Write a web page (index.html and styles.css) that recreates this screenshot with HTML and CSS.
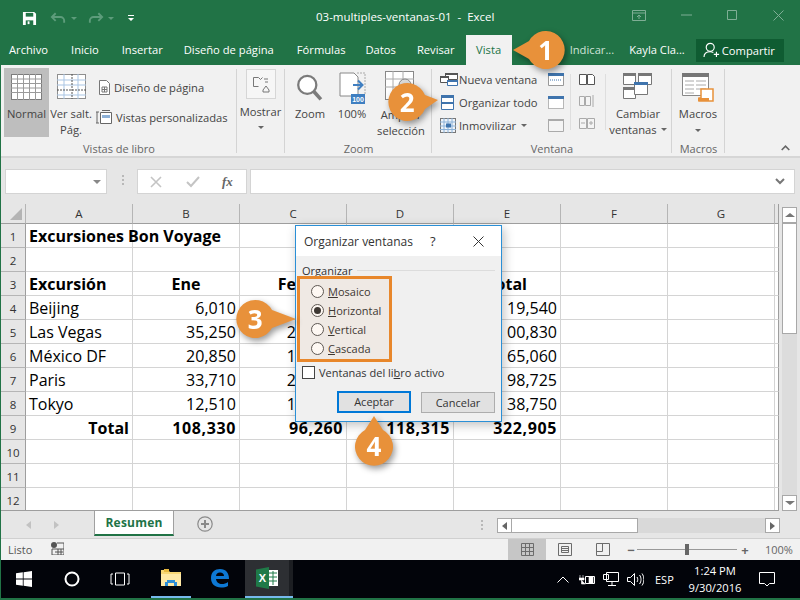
FILE: index.html
```html
<!DOCTYPE html>
<html lang="es">
<head>
<meta charset="utf-8">
<title>03-multiples-ventanas-01 - Excel</title>
<link rel="stylesheet" href="styles.css">
</head>
<body>
<div class="app">
  <header class="titlebar">
    <div class="qat">
      <svg width="15" height="15" viewBox="0 0 16 16"><path d="M1 1h12l2 2v12H1z" fill="#fff"/><path d="M4 2h8v4H4z" fill="#217346"/><path d="M4 10h8v5H4z" fill="#217346"/><path d="M6 11h2v3H6z" fill="#fff"/></svg>
      <svg class="q-undo" width="17" height="14" viewBox="0 0 18 14"><path d="M6 2L2 6l4 4M2 6h9a4 4 0 0 1 4 4v2" fill="none" stroke="#5d9c7b" stroke-width="2"/></svg>
      <span class="caret-dim"></span>
      <svg class="q-redo" width="17" height="14" viewBox="0 0 18 14"><path d="M12 2l4 4-4 4M16 6H7a4 4 0 0 0-4 4v2" fill="none" stroke="#5d9c7b" stroke-width="2"/></svg>
      <span class="caret-dim"></span>
      <svg class="q-menu" width="8" height="8" viewBox="0 0 8 8"><path d="M1 1h6v1H1zM1 4h6L4 7z" fill="#fff"/></svg>
    </div>
    <div class="doc-title">03-multiples-ventanas-01&nbsp; -&nbsp; Excel</div>
    <div class="winbtns">
      <svg width="14" height="11" viewBox="0 0 14 11"><path d="M.5.500h13v10H.5zM.5 3h13M7 9V5M5 7l2-2 2 2" fill="none" stroke="#7fae95"/></svg>
      <svg width="11" height="2" viewBox="0 0 11 2"><path d="M0 1h11" stroke="#7fae95"/></svg>
      <svg width="11" height="11" viewBox="0 0 11 11"><path d="M.5.500h9v9h-9z" fill="none" stroke="#7fae95"/></svg>
      <svg width="11" height="11" viewBox="0 0 11 11"><path d="M.5.500l10 10M10.500 .5l-10 10" fill="none" stroke="#7fae95"/></svg>
    </div>
  </header>

  <nav class="tabs">
    <span class="tab t-archivo">Archivo</span>
    <span class="tab t-inicio">Inicio</span>
    <span class="tab t-insertar">Insertar</span>
    <span class="tab t-diseno">Diseño de página</span>
    <span class="tab t-formulas">Fórmulas</span>
    <span class="tab t-datos">Datos</span>
    <span class="tab t-revisar">Revisar</span>
    <span class="tab active">Vista</span>
    <span class="tab t-indicar">Indicar...</span>
    <span class="tab t-user">Kayla Cla...</span>
    <span class="share">
      <svg width="18" height="16" viewBox="0 0 20 18"><circle cx="8" cy="6" r="4.500" fill="none" stroke="#fff" stroke-width="1.300"/><path d="M1 17c0-4 3-6 7-6 1.500 0 2.500.3 3.500.8M15 11v6M12 14h6" fill="none" stroke="#fff" stroke-width="1.300"/></svg>
      Compartir
    </span>
  </nav>

  <section class="ribbon">
    <div class="group g-vistas">
      <div class="group-body">
        <div class="big b-normal selected">
          <svg width="31" height="26" viewBox="0 0 31 26"><rect x=".5" y=".5" width="30" height="25" fill="#fff" stroke="#7c7c7c"/><path d="M0 5h31M0 9.500h31M0 14h31M0 18.500h31M6.500 0v26M12.500 0v26M18.500 0v26M24.500 0v26" stroke="#9a9a9a"/></svg>
          <span>Normal</span>
        </div>
        <div class="big b-salt">
          <svg width="29" height="25" viewBox="0 0 29 25"><rect x=".5" y=".5" width="28" height="24" fill="#fff" stroke="#8f8f8f"/><path d="M0 6h29M0 11h29M0 21h29M7 0v25M21 0v25" stroke="#a9c5e4"/><path d="M0 16h29M15 0v25" stroke="#555" stroke-dasharray="2 1"/></svg>
          <span>Ver salt.<br>Pág.</span>
        </div>
        <div class="stack s-vistas">
          <div class="row-cmd"><svg class="ind2" width="13" height="15" viewBox="0 0 13 15"><path d="M1.500.5h7l3 3v11h-10zM4 7h5v5H4zM6.500 7v5M4 9.500h5" fill="#fff" stroke="#777"/></svg><span>Diseño de página</span></div>
          <div class="row-cmd"><svg width="17" height="15" viewBox="0 0 17 15"><path d="M4.500 2.500h11v11h-11zM1 2v11M3 2H0M3 13H0M6 .5h8" fill="#fff" stroke="#666"/><path d="M6 5h8v3H6z" fill="#8db0d6"/></svg><span>Vistas personalizadas</span></div>
        </div>
      </div>
      <div class="group-label">Vistas de libro</div>
    </div>

    <div class="group g-mostrar">
      <div class="group-body">
        <div class="big b-mostrar">
          <span class="boxed"><svg width="18" height="18" viewBox="0 0 18 18"><path d="M1.500 2.500h5l2 2 2-2h0M1.500 2.500v9h5M12 4h4M13 7h3M11 15l3-4 3 4v2h-6z" fill="none" stroke="#777"/></svg></span>
          <span>Mostrar</span>
          <i class="caret"></i>
        </div>
      </div>
    </div>

    <div class="group g-zoom">
      <div class="group-body">
        <div class="big b-zoom">
          <svg width="30" height="29" viewBox="0 0 30 32"><circle cx="12" cy="12" r="10" fill="#fff" stroke="#7b7b7b" stroke-width="2.500"/><path d="M19 19l8 9" stroke="#7b7b7b" stroke-width="4"/></svg>
          <span>Zoom</span>
        </div>
        <div class="big b-100">
          <svg width="27" height="32" viewBox="0 0 27 32"><path d="M1 1h14l4 4v19H1z" fill="#fff" stroke="#888"/><path d="M18 1h8v22" fill="none" stroke="#aaa" stroke-dasharray="2 1"/><path d="M14 13h9M19 8.500l4.500 4.500-4.500 4.500" fill="none" stroke="#3f7fc1" stroke-width="2"/><rect x="12" y="22" width="14" height="10" fill="#3f7fc1"/><text x="19" y="30" font-size="7" fill="#fff" text-anchor="middle" font-family="Liberation Sans" font-weight="700">100</text></svg>
          <span>100%</span>
        </div>
        <div class="big b-ampliar">
          <svg width="32" height="32" viewBox="0 0 32 32"><rect x=".5" y=".5" width="28" height="28" fill="#fff" stroke="#888"/><path d="M0 8h29M0 16h29M8 0v29M18 0v29" stroke="#aaa"/><circle cx="20" cy="14" r="6" fill="#ddd" stroke="#888"/></svg>
          <span>Ampliar<br>selección</span>
        </div>
      </div>
      <div class="group-label">Zoom</div>
    </div>

    <div class="group g-ventana">
      <div class="group-body">
        <div class="stack s-ventana">
          <div class="row-cmd"><svg width="18" height="13" viewBox="0 0 18 13"><path d="M5.500 .5h12v6h-12z" fill="#fff" stroke="#555"/><path d="M5 0h13v2H5z" fill="#555"/><path d="M.5 3.500h8v6h-8z" fill="#fff" stroke="#555"/><path d="M0 3h9v2H0z" fill="#555"/><path d="M7.500 7.500h10v5h-10z" fill="#fff" stroke="#3f74ad"/><path d="M7 7h11v2H7z" fill="#3f74ad"/></svg><span>Nueva ventana</span></div>
          <div class="row-cmd"><svg class="ind1" width="13" height="15" viewBox="0 0 13 15"><path d="M.5.500h12v14H.5z" fill="#fff" stroke="#3f74ad"/><path d="M0 0h13v3H0zM0 7h13v2H0z" fill="#3f74ad"/></svg><span>Organizar todo</span></div>
          <div class="row-cmd"><svg width="16" height="15" viewBox="0 0 16 15"><rect x=".5" y=".5" width="15" height="14" fill="#eef3f9" stroke="#777"/><path d="M0 4h16M0 8h16M0 11.500h16M4 0v15M8 0v15M12 0v15" stroke="#8cb2d8"/><rect x="6" y="5.500" width="5" height="4" fill="#3f74ad"/></svg><span>Inmovilizar</span><i class="caret inline"></i></div>
        </div>
        <div class="tiny-col c-a">
          <svg width="16" height="13" viewBox="0 0 16 13"><path d="M.5.500h15v12H.5z" fill="#fff" stroke="#999"/><path d="M0 0h16v3H0z" fill="#3f74ad"/><path d="M2 7h12" stroke="#3f74ad" stroke-dasharray="1 1"/></svg>
          <svg width="16" height="13" viewBox="0 0 16 13"><path d="M.5.500h15v12H.5z" fill="#fff" stroke="#777" stroke-dasharray="1 1"/><path d="M0 0h16v3H0z" fill="#3f74ad"/></svg>
          <svg width="16" height="13" viewBox="0 0 16 13"><path d="M.5.500h15v12H.5z" fill="#f4f4f4" stroke="#aaa"/><path d="M0 0h16v2H0z" fill="#aaa"/></svg>
        </div>
        <span class="vsep"></span>
        <div class="tiny-col c-b">
          <svg width="16" height="12" viewBox="0 0 16 12"><path d="M.5 1.500h7v10h-7zM8.500 1.500h5l2 2v8h-7z" fill="#fff" stroke="#555"/></svg>
          <svg width="16" height="14" viewBox="0 0 16 14"><path d="M.5 2.500h5v9h-5zM6.500 2.500h5v9h-5zM14 1v12" fill="#f4f4f4" stroke="#aaa"/></svg>
          <svg width="16" height="12" viewBox="0 0 16 12"><path d="M.5 1.500h7v10h-7zM8.500 1.500h7v10h-7zM2 6h4M10 6h4M12 4v4" fill="#f4f4f4" stroke="#aaa"/></svg>
        </div>
        <span class="vsep"></span>
        <div class="big b-cambiar">
          <svg width="30" height="26" viewBox="0 0 30 26"><path d="M.5.500h12v11H.5zM15.500.5h13v11h-13zM.5 14.500h12v11H.5z" fill="#fff" stroke="#777"/><path d="M0 0h13v3H0zM15 0h14v3H15zM0 14h13v3H0z" fill="#777"/><path d="M11.500 9.500h13v12h-13z" fill="#fff" stroke="#777"/><path d="M11 9h14v3H11z" fill="#3f74ad"/></svg>
          <span>Cambiar<br>ventanas<i class="caret inline"></i></span>
        </div>
      </div>
      <div class="group-label">Ventana</div>
    </div>

    <div class="group g-macros">
      <div class="group-body">
        <div class="big b-macros">
          <svg width="32" height="29" viewBox="0 0 32 29"><path d="M.5.500h26v22H.5z" fill="#fff" stroke="#888"/><path d="M0 0h27v4H0z" fill="#777"/><path d="M3 8h9M14 8h10M3 12h9M14 12h10M3 16h9M14 16h10M3 20h9" stroke="#aaa"/><path d="M19 16h12v12H17v-3h2z" fill="#fff" stroke="#e8913a" stroke-width="1.500"/><path d="M16 25h11v3H16z" fill="#e8913a"/></svg>
          <span>Macros</span>
          <i class="caret"></i>
        </div>
      </div>
      <div class="group-label">Macros</div>
    </div>
    <svg class="collapse" width="9" height="6" viewBox="0 0 9 6"><path d="M.7 5l3.800-3.800L8.300 5" fill="none" stroke="#666" stroke-width="1.600"/></svg>
  </section>

  <section class="formula">
    <div class="namebox"><i class="caret grey"></i></div>
    <span class="grip"></span>
    <div class="fxbox">
      <svg width="12" height="12" viewBox="0 0 12 12"><path d="M1 1l10 10M11 1L1 11" stroke="#c4c4c4" stroke-width="1.600"/></svg>
      <svg width="14" height="12" viewBox="0 0 14 12"><path d="M1 6l4 4 8-9" fill="none" stroke="#c4c4c4" stroke-width="2"/></svg>
      <span class="fx">fx</span>
    </div>
    <div class="fbar"><svg width="10" height="7" viewBox="0 0 10 7"><path d="M1 1l4 4 4-4" fill="none" stroke="#777" stroke-width="2"/></svg></div>
  </section>

  <section class="sheet-area">
    <div class="grid">
      <div class="corner"><i></i></div>
      <div class="colh">A</div><div class="colh">B</div><div class="colh">C</div><div class="colh">D</div><div class="colh">E</div><div class="colh">F</div><div class="colh">G</div><div class="colh end"></div>

      <div class="rowh">1</div><div class="c b">Excursiones Bon Voyage</div><div class="c"></div><div class="c"></div><div class="c"></div><div class="c"></div><div class="c"></div><div class="c"></div><div class="c end"></div>
      <div class="rowh">2</div><div class="c"></div><div class="c"></div><div class="c"></div><div class="c"></div><div class="c"></div><div class="c"></div><div class="c"></div><div class="c end"></div>
      <div class="rowh">3</div><div class="c b">Excursión</div><div class="c b ctr">Ene</div><div class="c b r cut">Fe</div><div class="c"></div><div class="c b r cut-e">otal</div><div class="c"></div><div class="c"></div><div class="c end"></div>
      <div class="rowh">4</div><div class="c">Beijing</div><div class="c r">6,010</div><div class="c"></div><div class="c"></div><div class="c r">19,540</div><div class="c"></div><div class="c"></div><div class="c end"></div>
      <div class="rowh">5</div><div class="c">Las Vegas</div><div class="c r">35,250</div><div class="c r cut">2</div><div class="c"></div><div class="c r">00,830</div><div class="c"></div><div class="c"></div><div class="c end"></div>
      <div class="rowh">6</div><div class="c">México DF</div><div class="c r">20,850</div><div class="c r cut">1</div><div class="c"></div><div class="c r">65,060</div><div class="c"></div><div class="c"></div><div class="c end"></div>
      <div class="rowh">7</div><div class="c">Paris</div><div class="c r">33,710</div><div class="c r cut">2</div><div class="c"></div><div class="c r">98,725</div><div class="c"></div><div class="c"></div><div class="c end"></div>
      <div class="rowh">8</div><div class="c">Tokyo</div><div class="c r">12,510</div><div class="c r cut">1</div><div class="c"></div><div class="c r">38,750</div><div class="c"></div><div class="c"></div><div class="c end"></div>
      <div class="rowh">9</div><div class="c b r">Total</div><div class="c b r num">108,330</div><div class="c b r num">96,260</div><div class="c b r num">118,315</div><div class="c b r num">322,905</div><div class="c"></div><div class="c"></div><div class="c end"></div>
      <div class="rowh">10</div><div class="c"></div><div class="c"></div><div class="c"></div><div class="c"></div><div class="c"></div><div class="c"></div><div class="c"></div><div class="c end"></div>
      <div class="rowh">11</div><div class="c"></div><div class="c"></div><div class="c"></div><div class="c"></div><div class="c"></div><div class="c"></div><div class="c"></div><div class="c end"></div>
      <div class="rowh">12</div><div class="c"></div><div class="c"></div><div class="c"></div><div class="c"></div><div class="c"></div><div class="c"></div><div class="c"></div><div class="c end"></div>
    </div>
    <div class="vscroll">
      <div class="vbtn"><i class="tri-up"></i></div>
      <div class="vthumb"></div>
      <div class="vtrack"></div>
      <div class="vbtn"><i class="tri-down"></i></div>
    </div>
  </section>

  <section class="sheetbar">
    <div class="navs"><i class="tri-l"></i><i class="tri-r"></i></div>
    <div class="sheet-tab">Resumen</div>
    <svg class="plus" width="16" height="16" viewBox="0 0 16 16"><circle cx="8" cy="8" r="7.200" fill="none" stroke="#8a8a8a" stroke-width="1.200"/><path d="M8 4v8M4 8h8" stroke="#8a8a8a" stroke-width="2"/></svg>
    <span class="grip g2"></span>
    <div class="hscroll">
      <div class="hbtn"><i class="tri-l dark"></i></div>
      <div class="hthumb"></div>
      <div class="htrack"></div>
      <div class="hbtn"><i class="tri-r dark"></i></div>
    </div>
  </section>

  <footer class="status">
    <span class="listo">Listo</span>
    <svg class="macro-ic" width="13" height="13" viewBox="0 0 13 13"><circle cx="3" cy="3" r="3" fill="#555"/><path d="M6 1h7v12H1V7h12M4 10h8M7 7v6M10 7v6" fill="none" stroke="#555"/></svg>
    <div class="views">
      <span class="view on"><svg width="13" height="13" viewBox="0 0 13 13"><path d="M.5.500h12v12H.5zM.5 4.500h12M.5 8.500h12M4.500.5v12M8.500.5v12" fill="none" stroke="#6c6c6c"/></svg></span>
      <span class="view"><svg width="14" height="13" viewBox="0 0 14 13"><path d="M.5.500h13v12H.5zM3.500 3.500h7v6h-7zM3.500 5.500h7M3.500 7.500h7" fill="none" stroke="#6c6c6c"/></svg></span>
      <span class="view"><svg width="14" height="13" viewBox="0 0 14 13"><path d="M.5.500h13v12H.5zM.5 8.500h6v-8M6.500 8.500" fill="none" stroke="#6c6c6c"/></svg></span>
    </div>
    <div class="slider"><b class="sm">−</b><span class="track"><i></i></span><b class="sp">+</b></div>
    <span class="pct">100%</span>
  </footer>

  <div class="taskbar">
    <svg class="tb-win" width="16" height="16" viewBox="0 0 16 16"><path d="M0 2.300l6.800-1V7.600H0zM7.600 1.200L16 0v7.600H7.600zM0 8.400h6.800v6.300l-6.800-1zM7.600 8.400H16V16l-8.400-1.200z" fill="#fff"/></svg>
    <svg class="tb-cortana" width="16" height="16" viewBox="0 0 16 16"><circle cx="8" cy="8" r="6.500" fill="none" stroke="#fff" stroke-width="2"/></svg>
    <svg class="tb-tv" width="20" height="14" viewBox="0 0 20 14"><path d="M5.500 1h9v12h-9zM3 2H1v10h2M17 2h2v10h-2" fill="none" stroke="#fff"/></svg>
    <span class="tb-app folder"><svg width="22" height="20" viewBox="0 0 22 20"><path d="M1 2h7l2 2h11v14H1z" fill="#f8d775"/><path d="M1 6h20v12H1z" fill="#ffe9a6"/><path d="M4 1h5v3H4z" fill="#e8b93f"/><path d="M7 12h8v2h2v4h-3v-3H8v3H5v-4h2z" fill="#2f8fd8"/></svg></span>
    <span class="tb-app edge"><svg width="20" height="20" viewBox="0 0 20 20"><path d="M1 10C1 4 5 1 10 1c6 0 9 4 9 10H6c.2 3 3 5 6 5 2 0 4-.6 6-2v4c-2 1-4 1.500-7 1.500C5 19.500 1 16 1 10zM6 8h8c0-2-1.500-3.500-4-3.500S6.200 6 6 8z" fill="#0d78d4"/></svg></span>
    <span class="tb-app excel"><svg width="23" height="22" viewBox="0 0 23 22"><path d="M12 3h10v16H12z" fill="#fff"/><path d="M13 6h8M13 10h8M13 14h8M17 4v14" stroke="#1f7a48"/><path d="M0 2.500L13 0v22L0 19.500z" fill="#1f7a48"/><text x="6.500" y="15" font-size="11" font-weight="700" text-anchor="middle" fill="#fff" font-family="Liberation Sans">X</text></svg></span>
    <div class="tray">
      <svg width="12" height="7" viewBox="0 0 12 7"><path d="M.5 6.500L6 1l5.500 5.500" fill="none" stroke="#fff"/></svg>
      <svg width="16" height="11" viewBox="0 0 16 11"><path d="M6.500 2.500h9v7h-9z" fill="none" stroke="#fff"/><path d="M10 3h4v6h-4zM1 1v3M4 1v3M0 4h5v2H0zM2.500 6v4h4" fill="#fff" stroke="#fff" stroke-width=".6"/></svg>
      <svg width="16" height="14" viewBox="0 0 16 14"><path d="M3.500.5h12v9h-12zM9 9.500v4M5 13.500h8M.5 2.500h5v5h-5z" fill="#02040a" stroke="#fff"/></svg>
      <svg width="17" height="13" viewBox="0 0 17 13"><path d="M.5 4.500h3l4-4v12l-4-4h-3zM10 4c1 1.500 1 3.500 0 5M12.500 2c2 2.500 2 6.500 0 9M15 .5c2.500 3.500 2.500 8.500 0 12" fill="none" stroke="#fff"/></svg>
      <span class="lang">ESP</span>
      <span class="clock">1:24 PM<br>9/30/2016</span>
      <svg width="16" height="15" viewBox="0 0 16 15"><path d="M.5.500h15v11h-5l-2.500 2.500-2.500-2.500h-5z" fill="none" stroke="#fff"/></svg>
    </div>
  </div>

  <div class="dialog" role="dialog">
    <div class="dlg-head">
      <span class="dlg-title">Organizar ventanas</span>
      <span class="dlg-q">?</span>
      <svg width="11" height="11" viewBox="0 0 11 11"><path d="M.5.500l10 10M10.500.5l-10 10" stroke="#333" fill="none"/></svg>
    </div>
    <div class="dlg-body">
      <div class="legend"><span>Organizar</span><i></i></div>
      <div class="radios">
        <label class="radio"><i></i><span><u>M</u>osaico</span></label>
        <label class="radio on"><i></i><span><u>H</u>orizontal</span></label>
        <label class="radio"><i></i><span><u>V</u>ertical</span></label>
        <label class="radio"><i></i><span><u>C</u>ascada</span></label>
      </div>
      <label class="check"><i></i><span>Ventanas del li<u>b</u>ro activo</span></label>
      <div class="dlg-btns">
        <span class="btn primary">Aceptar</span>
        <span class="btn">Cancelar</span>
      </div>
    </div>
  </div>
  <div class="focus-rect"></div>

  <svg class="callout co1" width="60" height="46" viewBox="0 0 60 46"><path d="M6 20L22 11A19 19 0 1 1 22 29Z" fill="#e8913a"/><text x="38.700" y="30" class="co-num">1</text></svg>
  <svg class="callout co2" width="60" height="46" viewBox="0 0 60 46"><path d="M53 18L40 13A19 19 0 1 0 40 27Z" fill="#e8913a"/><text x="22.300" y="29.500" class="co-num">2</text></svg>
  <svg class="callout co3" width="66" height="46" viewBox="0 0 66 46"><path d="M64 22L40 13A19 19 0 1 0 40 31Z" fill="#e8913a"/><text x="23.300" y="31.500" class="co-num">3</text></svg>
  <svg class="callout co4" width="46" height="60" viewBox="0 0 46 60"><path d="M23 8L32 22A19 19 0 1 1 14 22Z" fill="#e8913a"/><text x="23" y="48" class="co-num">4</text></svg>
</div>
</body>
</html>
```
FILE: styles.css
```css
* { box-sizing: border-box; }
html, body { margin: 0; padding: 0; }
body { width: 800px; height: 600px; overflow: hidden; font-family: "Open Sans", "Noto Sans", sans-serif; background: #e6e6e6; color: #444; }
i { display: block; font-style: normal; }
svg { display: block; flex: none; }

.app { position: relative; width: 800px; height: 600px; display: flex; flex-direction: column; border-left: 1px solid #217346; border-bottom: 2px solid #217346; overflow: hidden; }

/* title */
.titlebar { height: 36px; background: #217346; display: flex; align-items: center; padding-left: 22px; flex: none; margin-left: -1px; }
.qat { display: flex; align-items: center; width: 288px; flex: none; }
.q-undo { margin-left: 13px; }
.q-redo { margin-left: 10px; }
.q-menu { margin-left: 13px; }
.caret-dim { width: 0; height: 0; margin-left: 4px; border: 3px solid transparent; border-top-color: #5d9c7b; border-bottom: 0; }
.doc-title { color: #fff; font-size: 11.500px; width: 322px; flex: none; padding: 0 0 3px 6px; }
.winbtns { display: flex; align-items: center; flex: none; margin-top: -6px; }
.winbtns svg { margin-left: 35px; }
.winbtns svg:first-child { margin-left: 0; }

/* tabs */
.tabs { height: 29px; background: #217346; position: relative; flex: none; display: flex; align-items: center; margin-left: -1px; color: #fff; font-size: 11.200px; padding-bottom: 3px; }
.tab { color: #fff; white-space: nowrap; flex: none; }
.t-archivo { margin-left: 9px; }
.t-inicio { margin-left: 23px; }
.t-insertar { margin-left: 23px; }
.t-diseno { margin-left: 21px; }
.t-formulas { margin-left: 23px; }
.t-datos { margin-left: 20px; }
.t-revisar { margin-left: 21px; }
.tab.active { margin: 0 0 -3px 11px; background: #f1f1f1; color: #217346; width: 46px; height: 30px; line-height: 29px; text-align: center; align-self: flex-end; }
.t-indicar { margin-left: 58px; color: #cfe3d8; }
.t-user { margin-left: 15px; }
.share { margin: 3px 0 0 11px; width: 88px; height: 23px; background: #0f5c32; display: flex; align-items: center; gap: 1px; padding: 0 0 1px 7px; flex: none; }

/* ribbon */
.ribbon { height: 93px; background: #f1f1f1; border-bottom: 2px solid #d6d6d6; display: flex; position: relative; flex: none; font-size: 11.200px; color: #444; }
.group { position: relative; height: 91px; padding-top: 3px; display: flex; flex-direction: column; flex: none; }
.group::after { content: ""; position: absolute; right: 0; top: 4px; bottom: 3px; width: 1px; background: #d4d4d4; }
.group-body { flex: 1; display: flex; min-height: 0; }
.group-label { height: 17px; line-height: 20px; text-align: center; color: #666; font-size: 11px; }
.g-vistas { width: 236px; }
.g-mostrar { width: 48px; }
.g-zoom { width: 147px; }
.g-ventana { width: 240px; }
.g-macros { width: 53px; }
.big { display: flex; flex-direction: column; align-items: center; text-align: center; line-height: 15.500px; }
.big > svg { margin-bottom: 6px; }
.selected { background: #bebebe; }
.b-normal { width: 45px; margin-left: 3px; padding-top: 6px; height: 69px; }
.b-normal > svg { margin-bottom: 6px; }
.b-salt { width: 44px; padding-top: 6px; }
.b-salt > svg { margin-bottom: 7px; }
.stack { display: flex; flex-direction: column; }
.row-cmd { display: flex; align-items: center; height: 15px; white-space: nowrap; }
.row-cmd svg { margin-right: 2px; }
.s-vistas { margin-left: 3px; padding-top: 12px; gap: 15px; }
.s-vistas .row-cmd svg { margin-right: 3px; }
.s-vistas .ind2 { margin: 0 5px 0 2px; }
.s-ventana { margin-left: 8px; width: 107px; padding-top: 4px; gap: 8px; }
.s-ventana .row-cmd { display: grid; grid-template-columns: 19px auto auto; justify-content: start; align-items: center; }
.s-ventana .row-cmd svg { margin-right: 0; }
.s-ventana .ind1 { margin-left: 1px; }
.b-mostrar { width: 47px; padding-top: 1px; }
.boxed { width: 30px; height: 30px; border: 1px solid #d6d6d6; background: #f6f6f6; display: flex; align-items: center; justify-content: center; margin-bottom: 5px; }
.caret { width: 0; height: 0; border: 3px solid transparent; border-top-color: #666; border-bottom: 0; margin-top: 6px; }
.caret.inline { display: inline-block; margin: 0 0 2px 4px; vertical-align: middle; }
.row-cmd .caret.inline { margin-left: 5px; margin-bottom: 0; }
.b-zoom { width: 44px; margin-left: 3px; padding-top: 6px; }
.b-zoom > svg { margin-bottom: 3px; }
.b-100 { width: 38px; padding-top: 4px; margin-left: 1px; }
.b-100 > svg { margin-bottom: 2px; }
.b-ampliar { width: 60px; padding-top: 3px; }
.b-ampliar > svg { margin-bottom: 4px; }
.tiny-col { display: flex; flex-direction: column; align-items: center; gap: 10px; padding-top: 5px; }
.c-a { width: 20px; margin-left: -1px; }
.c-b { width: 18px; gap: 9px; }
.vsep { width: 1px; height: 56px; margin: 6px 10px 0 9px; background: #dedede; flex: none; }
.c-a + .vsep { margin: 6px 7px 0 4px; }
.c-b + .vsep { margin: 6px 2px 0 9px; }
.b-cambiar { width: 60px; padding-top: 5px; }
.b-cambiar > svg { margin-bottom: 7px; }
.b-macros { width: 52px; padding-top: 5px; }
.b-macros > svg { margin-bottom: 4px; }
.b-macros .caret { margin-top: 7px; }
.collapse { position: absolute; right: 10px; bottom: 5px; }

/* formula */
.formula { height: 46px; background: #e6e6e6; flex: none; display: flex; align-items: flex-start; padding-top: 11px; padding-left: 4px; }
.namebox { width: 102px; height: 25px; background: #fff; border: 1px solid #d4d4d4; display: flex; justify-content: flex-end; align-items: center; padding-right: 5px; }
.caret.grey { margin: 0; border-width: 4px; border-bottom: 0; border-top-color: #888; }
.grip { width: 2px; height: 12px; margin: 6px 13px 0 15px; background: repeating-linear-gradient(#b8b8b8 0 2px, transparent 2px 4px); flex: none; }
.fxbox { width: 110px; height: 25px; background: #fff; border: 1px solid #d4d4d4; display: flex; align-items: center; padding-left: 12px; gap: 24px; }
.fx { font-family: "Liberation Serif", serif; font-style: italic; font-weight: 700; font-size: 13px; color: #666; margin-left: -2px; }
.fbar { width: 545px; height: 25px; margin-left: 3px; background: #fff; border: 1px solid #d4d4d4; display: flex; align-items: center; justify-content: flex-end; padding-right: 9px; }

/* sheet */
.sheet-area { flex: none; height: 307px; display: flex; overflow: hidden; }
.grid { width: 778px; height: 307px; display: grid; grid-template-columns: 25px repeat(7, 107px) 4px; grid-template-rows: 20px repeat(12, 24px); background: #fff; border-bottom: 1px solid #9e9e9e; overflow: hidden; }
.corner { background: #e6e6e6; border-right: 1px solid #b5b5b5; border-bottom: 1px solid #9e9e9e; display: flex; align-items: flex-end; justify-content: flex-end; padding: 0 3px 3px 0; }
.corner i { width: 0; height: 0; border-style: solid; border-width: 0 0 12px 12px; border-color: transparent transparent #b4b4b4 transparent; }
.colh { background: #e6e6e6; border-right: 1px solid #b5b5b5; border-bottom: 1px solid #9e9e9e; font-size: 11.500px; line-height: 19px; text-align: center; color: #333; }
.colh.end { border-right: 1px solid #9e9e9e; }
.rowh { background: #e6e6e6; border-right: 1px solid #9e9e9e; border-bottom: 1px solid #b5b5b5; font-size: 11.500px; line-height: 26px; text-align: center; color: #333; }
.c { border-right: 1px solid #d4d4d4; border-bottom: 1px solid #d4d4d4; padding: 0 3px; font-size: 16px; line-height: 25px; color: #000; white-space: nowrap; min-width: 0; }
.c.end { border-right: 1px solid #9e9e9e; padding: 0; }
.c.b { font-weight: 700; }
.c.r { text-align: right; }
.c.ctr { text-align: center; }
.c.num { letter-spacing: .6px; }
.c.cut { padding-right: 50px; }
.c.cut-e { padding-right: 33px; }

.vscroll { width: 21px; padding: 3px 3px 0 3px; background: #e6e6e6; display: flex; flex-direction: column; height: 307px; }
.vbtn { height: 16px; background: #fff; border: 1px solid #a8a8a8; flex: none; display: flex; align-items: center; justify-content: center; }
.vthumb { height: 111px; background: #fff; border: 1px solid #a8a8a8; flex: none; }
.vtrack { flex: 1; background: #dcdcdc; }
.tri-up { width: 0; height: 0; border-style: solid; border-width: 0 5px 4px; border-color: transparent transparent #777; }
.tri-down { width: 0; height: 0; border-style: solid; border-width: 4px 5px 0; border-color: #777 transparent transparent; }

/* sheet bar */
.sheetbar { height: 27px; background: #e6e6e6; flex: none; display: flex; align-items: flex-start; position: relative; }
.navs { display: flex; width: 93px; gap: 23px; padding: 10px 0 0 25px; }
.tri-l { width: 0; height: 0; border-style: solid; border-width: 4px 5px 4px 0; border-color: transparent #c2c2c2 transparent transparent; }
.tri-r { width: 0; height: 0; border-style: solid; border-width: 4px 0 4px 5px; border-color: transparent transparent transparent #c2c2c2; }
.tri-l.dark { border-right-color: #666; }
.tri-r.dark { border-left-color: #666; }
.sheet-tab { width: 80px; height: 25px; background: #fff; border: 1px solid #a0a0a0; border-top: 0; border-bottom: 2px solid #217346; color: #217346; font-weight: 700; font-size: 12px; text-align: center; line-height: 24px; letter-spacing: .2px; }
.plus { margin: 5px 0 0 23px; }
.grip.g2 { margin: 9px 14px 0 268px; height: 11px; }
.hscroll { display: flex; width: 283px; height: 16px; margin-top: 7px; }
.hbtn { width: 15px; height: 15px; background: #fff; border: 1px solid #a8a8a8; display: flex; align-items: center; justify-content: center; flex: none; }
.hthumb { width: 126px; height: 15px; background: #fff; border: 1px solid #a8a8a8; border-left: 0; flex: none; }
.htrack { flex: 1; height: 15px; background: #d9d9d9; }

/* status */
.status { height: 22px; background: #f1f1f1; flex: none; border-top: 1px solid #d0d0d0; display: flex; align-items: center; font-size: 11px; color: #555; position: relative; }
.listo { margin-left: 7px; width: 43px; }
.macro-ic { margin-top: -2px; }
.views { display: flex; margin-left: 444px; height: 100%; }
.view { width: 38px; display: flex; align-items: center; justify-content: center; }
.view.on { background: #c6c6c6; }
.slider { display: flex; align-items: center; margin-left: 5px; width: 122px; flex: none; }
.sm, .sp { font-weight: 700; font-size: 13px; color: #666; width: 8px; text-align: center; flex: none; }
.track { position: relative; display: block; width: 100px; height: 1px; background: #999; margin: 0 4px 0 2px; flex: none; }
.track i { position: absolute; left: 48px; top: -5px; width: 4px; height: 11px; background: #666; }
.pct { margin-left: 16px; color: #666; font-size: 11px; }

/* taskbar */
.taskbar { height: 38px; flex: none; background: #02040a; display: flex; align-items: center; position: relative; margin-left: -1px; color: #fff; }
.tb-win { margin-left: 16px; }
.tb-cortana { margin-left: 32px; }
.tb-tv { margin-left: 30px; }
.tb-app { height: 38px; display: flex; align-items: center; justify-content: center; border-bottom: 2px solid transparent; flex: none; }
.folder { width: 40px; margin-left: 21px; border-bottom-color: #76b9ed; }
.edge { width: 40px; margin-left: 9px; }
.excel { width: 48px; margin-left: 5px; padding-right: 4px; background: linear-gradient(90deg, #2d2f33 44px, #1c1e22 44px); border-bottom-color: #76b9ed; }
.tray { display: flex; align-items: center; margin-left: auto; }
.tray > svg:nth-child(1) { margin-right: 10px; }
.tray > svg:nth-child(2) { margin-right: 8px; }
.tray > svg:nth-child(3) { margin-right: 8px; }
.tray > svg:nth-child(4) { margin-right: 11px; }
.lang { font-size: 11px; width: 29px; }
.clock { font-size: 11.200px; line-height: 17px; text-align: center; width: 62px; margin-right: 13px; }
.tray > svg:last-child { margin-right: 25px; }

/* dialog */
.dialog { position: absolute; left: 294px; top: 225px; width: 207px; height: 197px; border: 1px solid #2a8fd6; background: #f0f0f0; box-shadow: 2px 3px 10px rgba(0,0,0,.25); font-size: 11px; color: #333; }
.dlg-head { height: 30px; background: #fff; display: flex; align-items: center; padding-left: 8px; }
.dlg-title { width: 126px; font-size: 12px; }
.dlg-q { width: 43px; font-size: 13px; }
.dlg-body { padding: 6px 6px 0; }
.legend { display: flex; align-items: center; gap: 5px; height: 16px; font-size: 11px; }
.legend i { flex: 1; height: 1px; background: #dcdcdc; }
.radios { display: flex; flex-direction: column; padding: 4px 0 0 9px; height: 85px; }
.radio { display: flex; align-items: center; gap: 4px; height: 19px; }
.radio i { width: 13px; height: 13px; border-radius: 50%; border: 1px solid #555; background: #fff; position: relative; flex: none; }
.radio.on i::after { content: ""; position: absolute; left: 2px; top: 2px; width: 7px; height: 7px; border-radius: 50%; background: #333; }
.check { display: flex; align-items: center; gap: 4px; height: 14px; margin-top: 2px; }
.check i { width: 13px; height: 13px; background: #fff; border: 1px solid #444; flex: none; }
.dlg-btns { display: flex; justify-content: flex-end; align-items: center; gap: 10px; margin-top: 12px; margin-right: 0; }
.btn { width: 74px; height: 21px; line-height: 19px; text-align: center; background: #e1e1e1; border: 1px solid #adadad; }
.btn.primary { height: 22px; line-height: 18px; border: 2px solid #0078d7; }
u { text-underline-offset: 1px; }
.focus-rect { position: absolute; left: 296px; top: 276px; width: 95px; height: 86px; border: 3px solid #e8872b; background: rgba(232, 135, 43, .06); pointer-events: none; }

/* callouts */
.callout { position: absolute; overflow: visible; filter: drop-shadow(2px 3px 3px rgba(0,0,0,.4)); }
.co-num { font-family: "Open Sans", sans-serif; font-weight: 700; font-size: 26px; fill: #fff; text-anchor: middle; }
.co1 { left: 506px; top: 30px; }
.co2 { left: 384px; top: 82px; }
.co3 { left: 231px; top: 297px; }
.co4 { left: 350px; top: 408px; }
```
